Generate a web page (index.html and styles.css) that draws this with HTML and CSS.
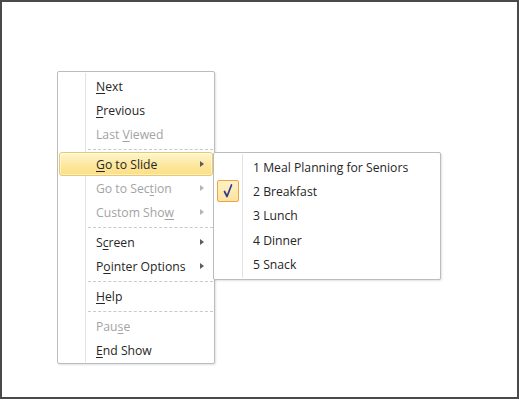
FILE: index.html
```html
<!DOCTYPE html>
<html>
<head>
<meta charset="utf-8">
<link rel="stylesheet" href="styles.css">
</head>
<body>
<div class="frame">
  <div class="menu main-menu">
    <div class="item"><span class="label"><u>N</u>ext</span></div>
    <div class="item"><span class="label"><u>P</u>revious</span></div>
    <div class="item disabled"><span class="label">Last <u>V</u>iewed</span></div>
    <div class="sep"></div>
    <div class="item active"><span class="label"><u>G</u>o to Slide</span><span class="arrow"></span></div>
    <div class="item disabled"><span class="label">Go to Sec<u>t</u>ion</span><span class="arrow"></span></div>
    <div class="item disabled"><span class="label">Custom Sho<u>w</u></span><span class="arrow"></span></div>
    <div class="sep"></div>
    <div class="item"><span class="label">S<u>c</u>reen</span><span class="arrow"></span></div>
    <div class="item"><span class="label">P<u>o</u>inter Options</span><span class="arrow"></span></div>
    <div class="sep"></div>
    <div class="item"><span class="label"><u>H</u>elp</span></div>
    <div class="sep"></div>
    <div class="item disabled"><span class="label">Pau<u>s</u>e</span></div>
    <div class="item"><span class="label"><u>E</u>nd Show</span></div>
  </div>
  <div class="menu sub-menu">
    <div class="item"><span class="label">1 Meal Planning for Seniors</span></div>
    <div class="item checked">
      <span class="check"><svg width="20" height="20" viewBox="0 0 20 20"><path d="M6.5 10.5 L9 15.5 L13.5 4" fill="none" stroke="#2b3a8c" stroke-width="1.7" stroke-linecap="round" stroke-linejoin="round"/></svg></span>
      <span class="label">2 Breakfast</span>
    </div>
    <div class="item"><span class="label">3 Lunch</span></div>
    <div class="item"><span class="label">4 Dinner</span></div>
    <div class="item"><span class="label">5 Snack</span></div>
  </div>
</div>
</body>
</html>
```

FILE: styles.css
```css
html, body {
  margin: 0;
  padding: 0;
  background: #ffffff;
}

.frame {
  position: relative;
  width: 519px;
  height: 399px;
  box-sizing: border-box;
  border: 2px solid #4a4a4a;
  background: #ffffff;
  font-family: "Open Sans", "Noto Sans", sans-serif;
  font-size: 12.2px;
  color: #262626;
}

.menu {
  position: absolute;
  box-sizing: border-box;
  background: #ffffff;
  border: 1px solid #b9bcc0;
  border-radius: 2px;
  box-shadow: 1px 1px 2px rgba(0, 0, 0, 0.12);
}

.menu::before {
  content: "";
  position: absolute;
  top: 1px;
  bottom: 1px;
  width: 1px;
  background: #e2e3e4;
  box-shadow: 1px 0 0 #ffffff;
}

.main-menu {
  left: 55px;
  top: 69px;
  width: 158px;
  padding: 2px 1px 1px 1px;
}

.main-menu::before {
  left: 27px;
}

.sub-menu {
  left: 211px;
  top: 150px;
  width: 228px;
  padding: 2px 1px 3px 1px;
}

.sub-menu::before {
  left: 28px;
}

.item {
  position: relative;
  height: 24px;
  box-sizing: border-box;
  display: flex;
  align-items: center;
  border: 1px solid transparent;
  border-radius: 3px;
  padding-left: 36px;
  padding-right: 8px;
  white-space: nowrap;
}

.sub-menu .item {
  padding-left: 37px;
  height: 24.3px;
}

.item u {
  text-decoration: underline;
  text-underline-offset: 2px;
}

.item.disabled {
  color: #a3a3a3;
}

.item.active {
  background: linear-gradient(#fef6d0, #fde8a1 50%, #fcdf86);
  border-color: #e8c96e;
  box-shadow: inset 0 0 0 1px rgba(255, 255, 255, 0.5);
}

.arrow {
  margin-left: auto;
  width: 0;
  height: 0;
  border-top: 3.5px solid transparent;
  border-bottom: 3.5px solid transparent;
  border-left: 4px solid #5c5c5c;
}

.item.disabled .arrow {
  border-left-color: #b4b4b4;
}

.sep {
  height: 6px;
  display: flex;
  align-items: center;
  padding-left: 29px;
}

.sep::after {
  content: "";
  flex: 1;
  border-top: 1px dashed #c9c9c9;
}

.check {
  position: absolute;
  left: 1px;
  top: 0px;
  width: 22px;
  height: 22px;
  box-sizing: border-box;
  border: 1px solid #f0a33e;
  border-radius: 2px;
  background: linear-gradient(#fef1c8, #fde3a0);
  display: flex;
  align-items: center;
  justify-content: center;
}
```
